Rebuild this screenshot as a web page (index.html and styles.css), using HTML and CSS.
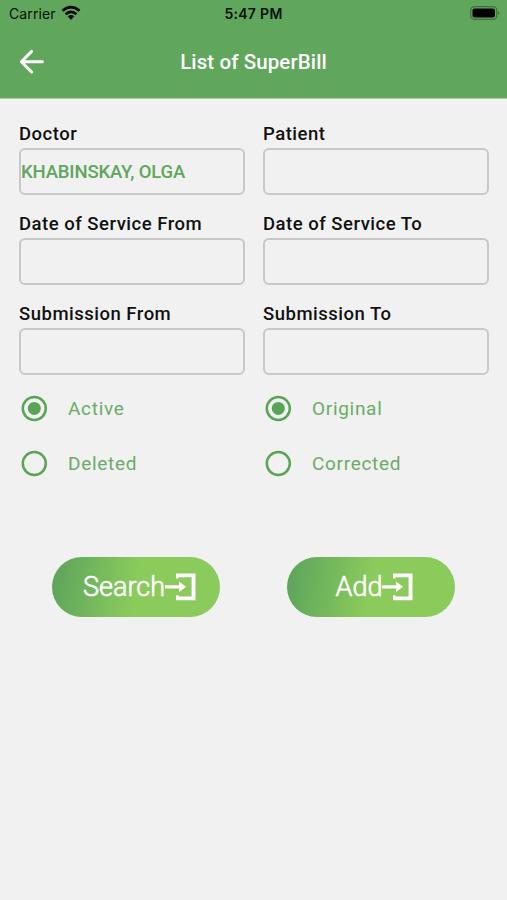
FILE: index.html
```html
<!DOCTYPE html>
<html lang="en">
<head>
<meta charset="utf-8">
<title>List of SuperBill</title>
<link rel="stylesheet" href="styles.css">
</head>
<body>
<header class="header">
  <div class="status">
    <div class="carrier"><span class="carrier-name">Carrier</span>
      <svg class="wifi" width="20" height="16" viewBox="0 0 20 16" fill="none" stroke="#000" stroke-width="2.7"><path d="M1.5 5.7Q10-1.5 18.5 5.7M4.6 9.2Q10 4.5 15.4 9.2"/><path d="M6.8 11.5Q10 8.6 13.2 11.5L10 14.7Z" fill="#000" stroke="none"/></svg>
    </div>
    <div class="clock">5:47 PM</div>
    <div class="power"><svg width="30" height="14" viewBox="0 0 30 14"><rect x=".7" y=".7" width="26" height="12.6" rx="3.6" fill="none" stroke="#3d713b" stroke-width="1.2"/><rect x="2.5" y="2.5" width="22.4" height="9" rx="2" fill="#000"/><path d="M28 5q2.6 2 0 4z" fill="#3d713b"/></svg></div>
  </div>
  <div class="bar">
    <svg class="back" width="26" height="26" viewBox="0 0 26 26" fill="none" stroke="#fff" stroke-width="3" stroke-linecap="round" stroke-linejoin="round"><path d="M24.4 12.7H3.6M13.6 2.4 3.4 12.7 13.6 23"/></svg>
    <h1 class="title">List of SuperBill</h1>
  </div>
</header>
<main>
  <div class="fields">
    <div class="field"><div class="label">Doctor</div><div class="box"><span class="value">KHABINSKAY, OLGA</span></div></div>
    <div class="field"><div class="label">Patient</div><div class="box"></div></div>
    <div class="field"><div class="label">Date of Service From</div><div class="box"></div></div>
    <div class="field"><div class="label">Date of Service To</div><div class="box"></div></div>
    <div class="field"><div class="label">Submission From</div><div class="box"></div></div>
    <div class="field"><div class="label">Submission To</div><div class="box"></div></div>
  </div>
  <div class="options">
    <div class="option"><svg class="radio" width="26" height="26" viewBox="0 0 26 26"><circle class="ring" cx="13.3" cy="12.4" r="11.5"/><circle class="dot" cx="13.3" cy="12.4" r="6.5"/></svg><span>Active</span></div>
    <div class="option"><svg class="radio" width="26" height="26" viewBox="0 0 26 26"><circle class="ring" cx="13.3" cy="12.4" r="11.5"/><circle class="dot" cx="13.3" cy="12.4" r="6.5"/></svg><span>Original</span></div>
    <div class="option"><svg class="radio" width="26" height="26" viewBox="0 0 26 26"><circle class="ring" cx="13.3" cy="12.4" r="11.5"/></svg><span>Deleted</span></div>
    <div class="option"><svg class="radio" width="26" height="26" viewBox="0 0 26 26"><circle class="ring" cx="13.3" cy="12.4" r="11.5"/></svg><span>Corrected</span></div>
  </div>
  <div class="actions">
    <button class="button"><span>Search</span><svg width="31" height="28" viewBox="0 0 31 28"><path d="M0 12.3h14V8.4l7 5.4-7 5.4v-3.8H0zM11 .4h19.5v26.8H11v-5h2.6v1.2h13V4.2h-13v1.2H11z" fill="#fff"/></svg></button>
    <button class="button"><span>Add</span><svg width="31" height="28" viewBox="0 0 31 28"><path d="M0 12.3h14V8.4l7 5.4-7 5.4v-3.8H0zM11 .4h19.5v26.8H11v-5h2.6v1.2h13V4.2h-13v1.2H11z" fill="#fff"/></svg></button>
  </div>
</main>
</body>
</html>
```
FILE: styles.css
```css
* { box-sizing: border-box; }
body { margin: 0; min-height: 900px; background: #f1f1f1; font-family: Roboto, sans-serif; }
.header { height: 98px; background: #60a65c; box-shadow: 0 1px #a9cca7; }
.status { height: 27px; display: grid; grid-template-columns: 1fr auto 1fr; padding: 0 7px 0 9px; font: 14px/28px Inter, sans-serif; color: #071006; }
.carrier { display: flex; gap: 5px; align-items: flex-start; }
.carrier-name { letter-spacing: .1px; }
.wifi { margin-top: 5px; }
.clock { font-weight: 600; letter-spacing: .3px; margin-right: 2px; }
.power { display: flex; justify-content: flex-end; padding-top: 6px; }
.bar { display: grid; grid-template-columns: 1fr auto 1fr; align-items: center; height: 70px; padding: 0 18px; }
.title { margin: 0; color: #fff; font-size: 20.5px; font-weight: 500; line-height: 28px; letter-spacing: .1px; }
.fields { display: grid; grid-template-columns: 226px 226px; column-gap: 18px; row-gap: 12px; padding: 21px 19px 0; }
.field { height: 78px; padding-top: 4px; }
.label { height: 25px; font-size: 18.5px; font-weight: 500; line-height: 23px; letter-spacing: .5px; color: #111; }
.box { height: 47px; border: 2px solid #c8c8c8; border-radius: 6px; display: flex; align-items: center; }
.value { color: #60a65c; font-size: 18.5px; font-weight: 500; letter-spacing: -.15px; }
.options { display: grid; grid-template-columns: 244px 1fr; grid-auto-rows: 55px; padding: 4px 0 0 21px; }
.option { display: flex; align-items: center; gap: 21px; color: #6aac67; font-size: 19px; letter-spacing: .7px; }
.ring { fill: none; stroke: #5aa457; stroke-width: 2.5; }
.dot { fill: #5aa457; }
.radio { overflow: visible; }
.actions { display: flex; gap: 67px; padding: 66px 0 0 52px; }
.button { width: 168px; height: 60px; padding: 0 0 0 7px; border: 0; border-radius: 30px; background: linear-gradient(100deg, #5ea55c 3%, #8bcb5c 50%); display: flex; align-items: center; justify-content: center; color: #fff; font: 300 27px/32px Roboto, sans-serif; -webkit-text-stroke: .6px #fff; }
```
